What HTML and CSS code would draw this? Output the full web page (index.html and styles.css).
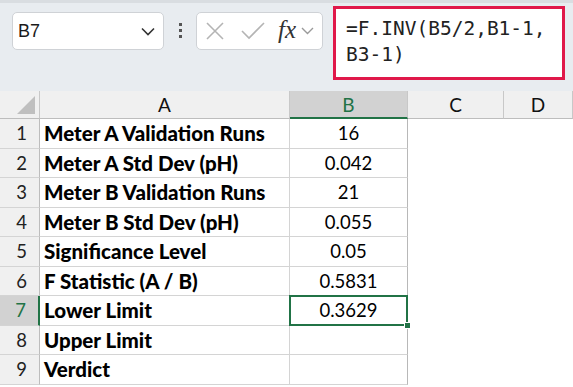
FILE: index.html
```html
<!DOCTYPE html>
<html lang="en">

<head>
    <meta charset="UTF-8">
    <meta name="viewport" content="width=device-width, initial-scale=1.0">
    <title>F.INV</title>
    <link rel="stylesheet" href="styles.css">
</head>

<body>
    <div class="toolbar">
        <div class="name-box">
            <span>B7</span>
            <svg width="14" height="9" viewBox="0 0 14 9"><path d="M1 1.5 L7 7.5 L13 1.5" fill="none" stroke="#333" stroke-width="1.6"/></svg>
        </div>
        <div class="dots"><i></i><i></i><i></i></div>
        <div class="fx-box">
            <svg width="18" height="18" viewBox="0 0 18 18"><path d="M1 1 L17 17 M17 1 L1 17" stroke="#b4b4b4" stroke-width="1.6"/></svg>
            <svg width="24" height="18" viewBox="0 0 24 18"><path d="M1 9 L8 16 L23 1" fill="none" stroke="#b4b4b4" stroke-width="1.6"/></svg>
            <span class="fx">fx</span>
            <svg width="13" height="8" viewBox="0 0 13 8"><path d="M1 1 L6.5 6.5 L12 1" fill="none" stroke="#9a9a9a" stroke-width="1.4"/></svg>
        </div>
        <div class="formula">=F.INV(B5/2,B1-1,<br>B3-1)</div>
    </div>

    <div class="sheet">
        <div class="hd corner"><span class="tri"></span></div>
        <div class="hd">A</div>
        <div class="hd active-col">B</div>
        <div class="hd">C</div>
        <div class="hd">D</div>

        <div class="rn">1</div><div class="cell label">Meter A Validation Runs</div><div class="cell num">16</div><div class="blank"></div><div class="blank"></div>
        <div class="rn">2</div><div class="cell label">Meter A Std Dev (pH)</div><div class="cell num">0.042</div><div class="blank"></div><div class="blank"></div>
        <div class="rn">3</div><div class="cell label">Meter B Validation Runs</div><div class="cell num">21</div><div class="blank"></div><div class="blank"></div>
        <div class="rn">4</div><div class="cell label">Meter B Std Dev (pH)</div><div class="cell num">0.055</div><div class="blank"></div><div class="blank"></div>
        <div class="rn">5</div><div class="cell label">Significance Level</div><div class="cell num">0.05</div><div class="blank"></div><div class="blank"></div>
        <div class="rn">6</div><div class="cell label">F Statistic (A / B)</div><div class="cell num">0.5831</div><div class="blank"></div><div class="blank"></div>
        <div class="rn active-row">7</div><div class="cell label">Lower Limit</div><div class="cell num selected">0.3629<span class="handle"></span></div><div class="blank"></div><div class="blank"></div>
        <div class="rn">8</div><div class="cell label">Upper Limit</div><div class="cell num"></div><div class="blank"></div><div class="blank"></div>
        <div class="rn">9</div><div class="cell label">Verdict</div><div class="cell num"></div><div class="blank"></div><div class="blank"></div>
    </div>
</body>

</html>
```

FILE: styles.css
```css
* {
    padding: 0;
    margin: 0;
    box-sizing: border-box;
}

body {
    font-family: Lato, 'Noto Sans', sans-serif;
    background: #ffffff;
    width: 573px;
    height: 387px;
    overflow: hidden;
}

.toolbar {
    display: flex;
    align-items: flex-start;
    height: 91px;
    padding-left: 12px;
    background: #e8ecf0;
    border-top: 3px solid #d9dde1;
}

.name-box {
    display: flex;
    align-items: center;
    justify-content: space-between;
    width: 152px;
    height: 38px;
    margin-top: 9px;
    padding: 0 8px 0 5px;
    background: #ffffff;
    border: 1px solid #cfd2d6;
    border-radius: 5px;
    font-family: 'Liberation Sans', Arial, sans-serif;
    font-size: 18px;
    color: #1a1a1a;
}

.dots {
    display: flex;
    flex-direction: column;
    gap: 3px;
    width: 32px;
    align-items: center;
    margin-top: 20px;
}

.dots i {
    display: block;
    width: 3px;
    height: 3px;
    background: #555;
}

.fx-box {
    display: flex;
    align-items: center;
    width: 127px;
    height: 38px;
    margin-top: 9px;
    padding: 0 3px 0 9px;
    background: #ffffff;
    border: 1px solid #cfd2d6;
    border-radius: 5px;
}

.fx-box svg:nth-child(2) {
    margin-left: 17px;
}

.fx {
    margin-left: 13px;
    margin-right: 5px;
    font-family: 'Liberation Serif', 'DejaVu Serif', serif;
    font-style: italic;
    font-size: 25px;
    color: #333;
    line-height: 1;
    position: relative;
    top: -2px;
}

.formula {
    width: 232px;
    height: 74px;
    margin-left: 10px;
    margin-top: 3px;
    padding: 7px 0 0 10px;
    background: #ffffff;
    border: 3px solid #e0184a;
    font-family: 'DejaVu Sans Mono', 'Liberation Mono', monospace;
    font-size: 19.5px;
    line-height: 26px;
    color: #222;
}

.sheet {
    display: grid;
    grid-template-columns: 40px 250px 118px 96px 69px;
    grid-template-rows: 28px repeat(9, 29.5px);
    background: #ffffff;
    font-size: 18.5px;
    color: #000;
}

.hd {
    display: flex;
    align-items: center;
    justify-content: center;
    background: #f0f0f0;
    border-right: 1px solid #c8c8c8;
    border-bottom: 1px solid #bdbdbd;
    color: #111;
    font-size: 19px;
}

.corner {
    position: relative;
}

.tri {
    position: absolute;
    right: 4px;
    bottom: 4px;
    width: 0;
    height: 0;
    border-left: 18px solid transparent;
    border-bottom: 18px solid #bfbfbf;
}

.active-col {
    background: #d2d2d2;
    color: #217346;
    border-bottom: 2px solid #217346;
}

.rn {
    display: flex;
    align-items: center;
    justify-content: flex-end;
    padding-right: 12px;
    background: #f0f0f0;
    border-right: 1px solid #bdbdbd;
    border-bottom: 1px solid #d4d4d4;
    color: #222;
}

.active-row {
    background: #d2d2d2;
    color: #217346;
    border-right: 2px solid #217346;
}

.cell {
    display: flex;
    align-items: center;
    border-right: 1px solid #d4d4d4;
    border-bottom: 1px solid #d4d4d4;
}

.label {
    font-weight: 900;
    font-size: 20.5px;
    padding-left: 4px;
}

.num {
    justify-content: center;
    border-right-color: #b8b8b8;
}

.selected {
    position: relative;
    border: 2px solid #217346;
    margin: -1px 0 0 -1px;
}

.handle {
    position: absolute;
    right: -5px;
    bottom: -5px;
    width: 7px;
    height: 7px;
    background: #217346;
    border: 1px solid #ffffff;
}

.blank {
    background: #ffffff;
}
```
